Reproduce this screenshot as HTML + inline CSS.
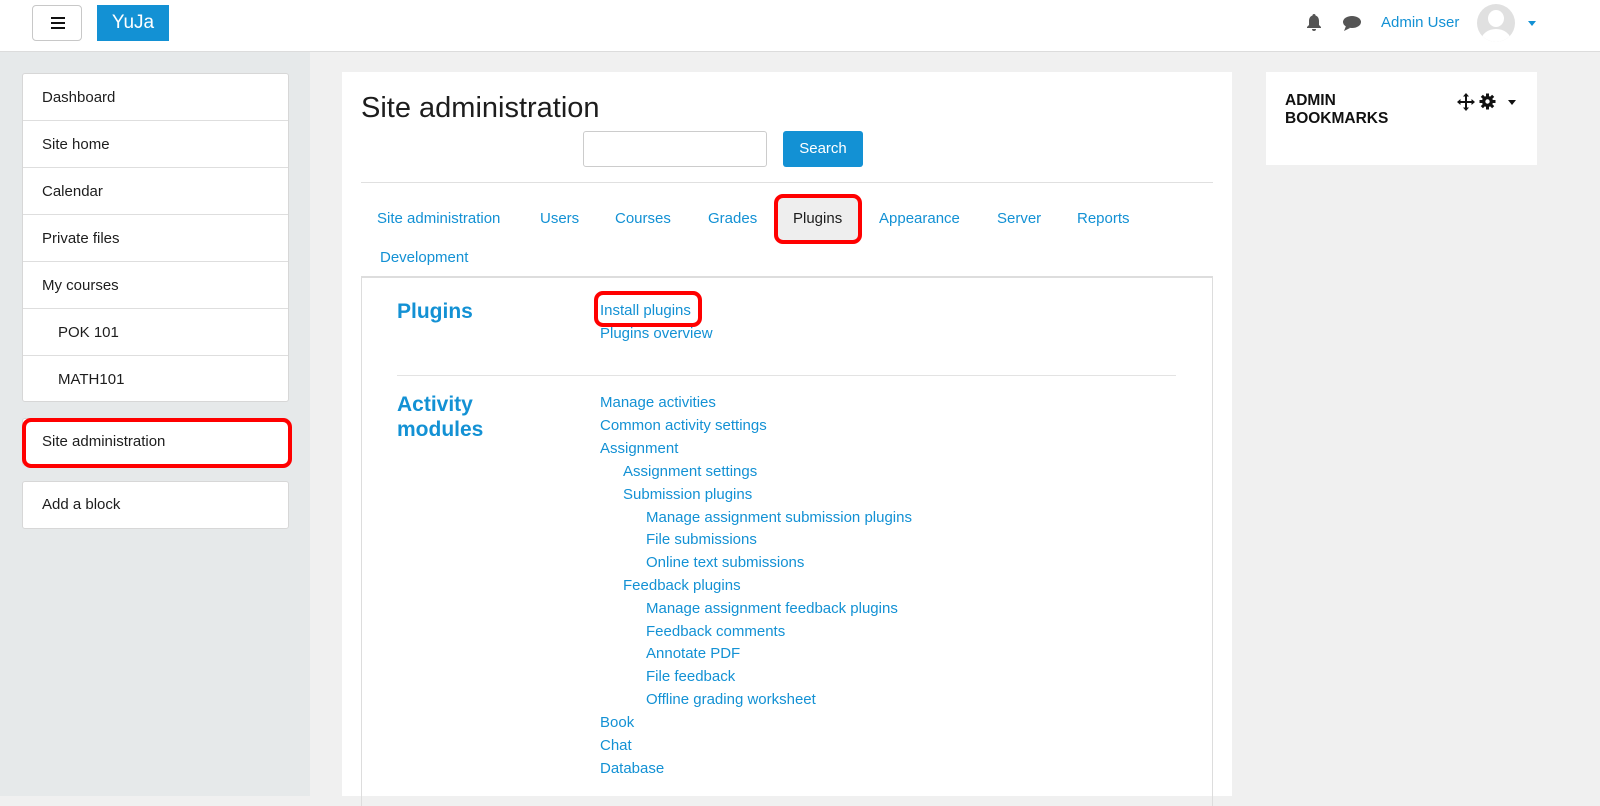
<!DOCTYPE html>
<html><head><meta charset="utf-8"><style>
*{box-sizing:border-box;margin:0;padding:0}
body{width:1600px;height:796px;overflow:hidden;font-family:"Liberation Sans",Arial,sans-serif;background:#f0f0f0;position:relative;font-size:15px;color:#1d1d1d}
a{color:#1391d4;text-decoration:none}
.hdr{position:absolute;left:0;top:0;width:1600px;height:52px;background:#fff;border-bottom:1px solid #dcdcdc}
.burger{position:absolute;left:32px;top:5px;width:50px;height:36px;border:1px solid #c8c8c8;border-radius:4px;background:#fff}
.burger i{position:absolute;left:18px;width:14px;height:2px;background:#111}
.logo{position:absolute;left:97px;top:5px;width:72px;height:36px;background:#1391d4;color:#fff;font-size:19px;text-align:center;line-height:36px}
.left{position:absolute;left:0;top:52px;width:310px;height:744px;background:#e6e9ea}
.card{position:absolute;background:#fff;border:1px solid #d7d7d7;border-radius:3px}
.li{height:47px;border-bottom:1px solid #dedede;padding-left:19px;line-height:47px;font-size:15px}
.red{position:absolute;border:4px solid #f00;border-radius:9px}
.main{position:absolute;left:342px;top:72px;width:890px;height:724px;background:#fff}
h1{position:absolute;left:19px;top:20px;font-size:29px;font-weight:400;color:#1d1d1d}
.tabs a{position:absolute;font-size:15px}
.sec a{position:absolute;font-size:15px}
</style></head><body>
<div class="hdr">
<div class="burger"><i style="top:11px"></i><i style="top:16px"></i><i style="top:21px"></i></div>
<div class="logo">YuJa</div>
<svg style="position:absolute;left:1306px;top:13px" width="16" height="18" viewBox="0 0 16 18"><path d="M8 1a1.5 1.5 0 0 1 1.5 1.5C12 3.3 13 5.5 13 8v4l2 2v1H1v-1l2-2V8c0-2.5 1-4.7 3.5-5.5A1.5 1.5 0 0 1 8 1zM6 16h4a2 2 0 0 1-4 0z" fill="#555"/></svg>
<svg style="position:absolute;left:1342px;top:15px" width="20" height="16" viewBox="0 0 20 16"><ellipse cx="10" cy="7" rx="9" ry="6" fill="#555"/><path d="M4 11l-2 5 6-3z" fill="#555"/></svg>
<a style="position:absolute;left:1381px;top:14px;font-size:15px">Admin User</a>
<div style="position:absolute;left:1477px;top:4px;width:38px;height:38px;border-radius:50%;background:#e0e0e0;overflow:hidden"><div style="position:absolute;left:11px;top:6px;width:16px;height:17px;border-radius:50%;background:#fff"></div><div style="position:absolute;left:4px;top:25px;width:30px;height:24px;border-radius:50%;background:#fff"></div></div>
<div style="position:absolute;left:1528px;top:21px;border:4px solid transparent;border-top:5px solid #1391d4"></div>
</div>
<div class="left"></div>
<div class="card" style="left:22px;top:73px;width:267px;height:329px">
<div class="li">Dashboard</div><div class="li">Site home</div><div class="li">Calendar</div><div class="li">Private files</div><div class="li">My courses</div><div class="li" style="padding-left:35px">POK 101</div><div class="li" style="padding-left:35px;border:0">MATH101</div>
</div>
<div class="card" style="left:22px;top:418px;width:267px;height:48px"><div class="li" style="border:0;line-height:46px">Site administration</div></div>
<div class="red" style="left:22px;top:418px;width:270px;height:50px"></div>
<div class="card" style="left:22px;top:481px;width:267px;height:48px"><div class="li" style="border:0;line-height:46px">Add a block</div></div>
<div class="main">
<h1>Site administration</h1>
<div style="position:absolute;left:241px;top:59px;width:184px;height:36px;border:1px solid #ccc;border-radius:3px"></div>
<div style="position:absolute;left:441px;top:59px;width:80px;height:36px;background:#1391d4;border-radius:3px;color:#fff;text-align:center;line-height:36px;font-size:15px">Search</div>
<div style="position:absolute;left:19px;top:110px;width:852px;height:1px;background:#e0e0e0"></div>
<div class="tabs">
<a style="left:35px;top:138px">Site administration</a><a style="left:198px;top:138px">Users</a><a style="left:273px;top:138px">Courses</a><a style="left:366px;top:138px">Grades</a>
<div style="position:absolute;left:435px;top:126px;width:82px;height:42px;background:#eee;border-radius:6px"></div>
<span style="position:absolute;left:451px;top:138px">Plugins</span>
<div class="red" style="left:432px;top:122px;width:88px;height:50px"></div>
<a style="left:537px;top:138px">Appearance</a><a style="left:655px;top:138px">Server</a><a style="left:735px;top:138px">Reports</a><a style="left:38px;top:177px">Development</a>
</div>
<div style="position:absolute;left:19px;top:204px;width:852px;height:530px;border:1px solid #ddd;border-top:2px solid #ddd;border-bottom:0"></div>
<div class="sec">
<a style="left:55px;top:227px;font-size:21px;font-weight:700;line-height:26px">Plugins</a>
<a style="left:258px;top:230px">Install plugins</a>
<div class="red" style="left:252px;top:219px;width:108px;height:36px"></div>
<a style="left:258px;top:253px">Plugins overview</a>
<div style="position:absolute;left:55px;top:303px;width:779px;height:1px;background:#e3e3e3"></div>
<a style="left:55px;top:320px;font-size:21px;font-weight:700;line-height:25px">Activity<br>modules</a>
<a style="left:258px;top:322px">Manage activities</a>
<a style="left:258px;top:345px">Common activity settings</a>
<a style="left:258px;top:368px">Assignment</a>
<a style="left:281px;top:391px">Assignment settings</a>
<a style="left:281px;top:414px">Submission plugins</a>
<a style="left:304px;top:437px">Manage assignment submission plugins</a>
<a style="left:304px;top:459px">File submissions</a>
<a style="left:304px;top:482px">Online text submissions</a>
<a style="left:281px;top:505px">Feedback plugins</a>
<a style="left:304px;top:528px">Manage assignment feedback plugins</a>
<a style="left:304px;top:551px">Feedback comments</a>
<a style="left:304px;top:573px">Annotate PDF</a>
<a style="left:304px;top:596px">File feedback</a>
<a style="left:304px;top:619px">Offline grading worksheet</a>
<a style="left:258px;top:642px">Book</a>
<a style="left:258px;top:665px">Chat</a>
<a style="left:258px;top:688px">Database</a>
</div>
</div>
<div style="position:absolute;left:1266px;top:72px;width:271px;height:93px;background:#fff">
<div style="position:absolute;left:19px;top:20px;font-size:15.5px;font-weight:700;line-height:18px;color:#111">ADMIN<br>BOOKMARKS</div>
<svg style="position:absolute;left:191px;top:21px" width="18" height="18" viewBox="0 0 18 18"><path d="M9 0l3 3.5H10V8h4.5V6L18 9l-3.5 3v-2H10v4.5h2L9 18l-3-3.5h2V10H3.5v2L0 9l3.5-3v2H8V3.5H6z" fill="#111"/></svg>
<svg style="position:absolute;left:213px;top:21px" width="17" height="17" viewBox="0 0 17 17"><g fill="#111"><circle cx="8.5" cy="8.5" r="5.5"/><rect x="7" y="0.5" width="3" height="16"/><rect x="0.5" y="7" width="16" height="3"/><rect x="7" y="0.5" width="3" height="16" transform="rotate(45 8.5 8.5)"/><rect x="7" y="0.5" width="3" height="16" transform="rotate(-45 8.5 8.5)"/></g><circle cx="8.5" cy="8.5" r="2.2" fill="#fff"/></svg>
<div style="position:absolute;left:242px;top:28px;border:4px solid transparent;border-top:5px solid #111"></div>
</div>
</body></html>
